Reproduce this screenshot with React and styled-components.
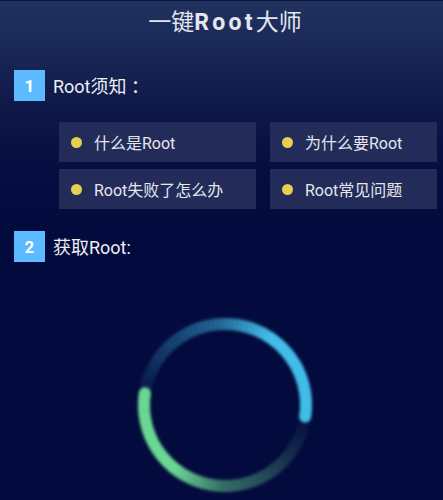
import React from "react";
import styled, { createGlobalStyle } from "styled-components";

const GlobalStyle = createGlobalStyle`
  html, body {
    margin: 0;
    height: 100%;
    background: #030a3d;
  }
  * { box-sizing: border-box; }
`;

const FONT = `Roboto, "Noto Sans CJK SC", sans-serif`;
const CX = 105;
const CY = 100;
const R = 81;

const questions = [
  ["什么是Root", "为什么要Root"],
  ["Root失败了怎么办", "Root常见问题"],
];

// opacity falls off along the tail of each arc
function tailOpacity(t) {
  if (t < 0.32) return 1;
  if (t < 0.52) return 1 - ((t - 0.32) / 0.2) * 0.55;
  if (t < 0.85) return 0.45 - ((t - 0.52) / 0.33) * 0.33;
  return Math.max(0, 0.12 - ((t - 0.85) / 0.15) * 0.12);
}

function point(deg) {
  const a = (deg * Math.PI) / 180;
  return [CX + R * Math.cos(a), CY + R * Math.sin(a)];
}

function ArcTail({ head, span, color }) {
  const steps = 60;
  const pieces = [];
  for (let i = 0; i < steps; i++) {
    const [x1, y1] = point(head - (span * i) / steps);
    const [x2, y2] = point(head - (span * (i + 1.15)) / steps);
    pieces.push(
      <path
        key={i}
        d={`M${x1} ${y1}A${R} ${R} 0 0 0 ${x2} ${y2}`}
        stroke={color}
        strokeOpacity={tailOpacity(i / steps)}
      />
    );
  }
  const [hx, hy] = point(head);
  return (
    <g fill="none" strokeWidth="12">
      {pieces}
      <circle cx={hx} cy={hy} r="6" fill={color} />
    </g>
  );
}

export default function App() {
  return (
    <Page>
      <GlobalStyle />
      <Title>
        一键<b>Root</b>大师
      </Title>
      <StepRow>
        <Badge>1</Badge>
        <StepText>Root须知 ：</StepText>
      </StepRow>
      <QuestionGrid>
        {questions.flat().map((q) => (
          <Question key={q}>
            <Dot />
            <span>{q}</span>
          </Question>
        ))}
      </QuestionGrid>
      <StepRow $tight>
        <Badge>2</Badge>
        <StepText>获取Root:</StepText>
      </StepRow>
      <RingWrap>
        <svg width="210" height="200" viewBox="0 0 210 200">
          <defs>
            <filter id="soft" x="-20%" y="-20%" width="140%" height="140%">
              <feGaussianBlur stdDeviation="1.8" />
            </filter>
          </defs>
          <g filter="url(#soft)">
            <ArcTail head={8.4} span={196} color="#43bde8" />
            <ArcTail head={188.4} span={182} color="#6ad793" />
          </g>
        </svg>
      </RingWrap>
    </Page>
  );
}

const Page = styled.div`
  width: 443px;
  height: 500px;
  overflow: hidden;
  font-family: ${FONT};
  color: #eef0f6;
  border-top: 1px solid #0c1440;
  background: linear-gradient(#21325f 0, #1b2a59 40px, #0e1849 105px, #060d40 170px, #030a3d 220px);
`;

const Title = styled.div`
  height: 44px;
  line-height: 44px;
  text-align: center;
  padding-left: 7px;
  font-size: 23px;
  color: #e4e7ee;

  b {
    font-weight: 700;
    letter-spacing: 3.2px;
  }
`;

const StepRow = styled.div`
  display: flex;
  align-items: center;
  gap: 8px;
  height: 31px;
  margin: ${(p) => (p.$tight ? "22px" : "25px")} 0 0 14px;
`;

const Badge = styled.div`
  width: 31px;
  height: 31px;
  display: flex;
  align-items: center;
  justify-content: center;
  background: #5cbaff;
  color: #fff;
  font-size: 17px;
  font-weight: 700;
`;

const StepText = styled.div`
  font-size: 18px;
  padding-bottom: 2px;
  color: #eceef4;
`;

const QuestionGrid = styled.div`
  display: grid;
  grid-template-columns: 197px 167px;
  grid-auto-rows: 40px;
  column-gap: 14px;
  row-gap: 7px;
  margin: 21px 0 0 59px;
`;

const Question = styled.div`
  display: flex;
  align-items: center;
  gap: 12px;
  padding-left: 12px;
  background: #232c58;
  font-size: 16px;
  color: #e4e6ee;
`;

const Dot = styled.i`
  width: 11px;
  height: 11px;
  border-radius: 50%;
  background: #e6cf52;
`;

const RingWrap = styled.div`
  margin: 43px 0 0 120px;
  line-height: 0;
`;
